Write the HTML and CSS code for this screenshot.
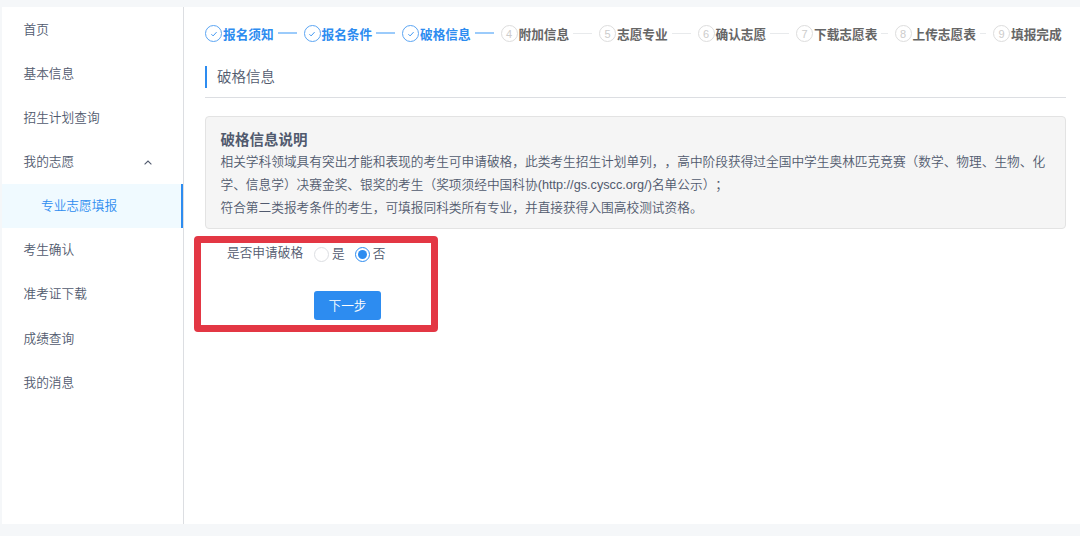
FILE: index.html
```
<!DOCTYPE html>
<html lang="zh-CN">

<head>
    <meta charset="UTF-8">
    <meta name="viewport" content="width=device-width, initial-scale=1.0">
    <title>专业志愿填报</title>
    <link rel="stylesheet" href="styles.css">
</head>

<body>
    <div class="layout">
        <nav class="sidebar">
            <a class="menu-item">首页</a>
            <a class="menu-item">基本信息</a>
            <a class="menu-item">招生计划查询</a>
            <a class="menu-item menu-parent">我的志愿
                <svg class="arrow" width="8" height="5" viewBox="0 0 8 5"><path d="M0.6 4.4 L4 1 L7.4 4.4" /></svg>
            </a>
            <a class="menu-item menu-sub active">专业志愿填报</a>
            <a class="menu-item">考生确认</a>
            <a class="menu-item">准考证下载</a>
            <a class="menu-item">成绩查询</a>
            <a class="menu-item">我的消息</a>
        </nav>

        <main class="content">
            <div class="steps">
                <div class="step done">
                    <span class="step-icon"><svg width="8" height="8" viewBox="0 0 8 8"><path d="M1.4 4.2 L3.1 5.9 L6.6 2.1" /></svg></span>
                    <span class="step-title">报名须知</span>
                </div>
                <div class="step done">
                    <span class="step-icon"><svg width="8" height="8" viewBox="0 0 8 8"><path d="M1.4 4.2 L3.1 5.9 L6.6 2.1" /></svg></span>
                    <span class="step-title">报名条件</span>
                </div>
                <div class="step done">
                    <span class="step-icon"><svg width="8" height="8" viewBox="0 0 8 8"><path d="M1.4 4.2 L3.1 5.9 L6.6 2.1" /></svg></span>
                    <span class="step-title">破格信息</span>
                </div>
                <div class="step">
                    <span class="step-icon">4</span>
                    <span class="step-title">附加信息</span>
                </div>
                <div class="step">
                    <span class="step-icon">5</span>
                    <span class="step-title">志愿专业</span>
                </div>
                <div class="step">
                    <span class="step-icon">6</span>
                    <span class="step-title">确认志愿</span>
                </div>
                <div class="step">
                    <span class="step-icon">7</span>
                    <span class="step-title">下载志愿表</span>
                </div>
                <div class="step">
                    <span class="step-icon">8</span>
                    <span class="step-title">上传志愿表</span>
                </div>
                <div class="step">
                    <span class="step-icon">9</span>
                    <span class="step-title">填报完成</span>
                </div>
            </div>

            <div class="section-title"><h2>破格信息</h2></div>

            <div class="notice">
                <h3>破格信息说明</h3>
                <p>相关学科领域具有突出才能和表现的考生可申请破格，此类考生招生计划单列，，高中阶段获得过全国中学生奥林匹克竞赛（数学、物理、生物、化<br>学、信息学）决赛金奖、银奖的考生（奖项须经中国科协(http://gs.cyscc.org/)名单公示）；</p>
                <p>符合第二类报考条件的考生，可填报同科类所有专业，并直接获得入围高校测试资格。</p>
            </div>

            <form class="apply-form">
                <div class="form-row">
                    <span class="form-label">是否申请破格</span>
                    <label class="radio"><span class="dot"></span>是</label>
                    <label class="radio checked"><span class="dot"></span>否</label>
                </div>
                <button type="button" class="next-btn">下一步</button>
                <div class="highlight"></div>
            </form>
        </main>
    </div>
</body>

</html>
```
FILE: styles.css
```
* {
    box-sizing: border-box;
}

body {
    margin: 0;
    height: 536px;
    padding: 7px 0 12px 2px;
    background-color: #f5f7f9;
    font-family: "Liberation Sans", "Noto Sans CJK SC", sans-serif;
    font-size: 12.69px;
    font-weight: 350;
    text-spacing-trim: space-all;
    color: #515a6e;
    overflow: hidden;
}

h2,
h3,
p {
    margin: 0;
}

.layout {
    display: flex;
    height: 100%;
    background-color: #fff;
}

/* left menu */
.sidebar {
    width: 182px;
    flex: none;
    border-right: 1px solid #dcdee2;
}

.menu-item {
    display: flex;
    align-items: center;
    height: 44.15px;
    padding: 0 0 2px 21.5px;
}

.menu-parent {
    justify-content: space-between;
    padding-right: 31px;
}

.arrow {
    margin-top: 4px;
    fill: none;
    stroke: #515a6e;
    stroke-width: 1.1;
}

.menu-sub {
    padding-left: 39px;
}

.active {
    color: #2d8cf0;
    background-color: #f0faff;
    border-right: 2px solid #2d8cf0;
}

.content {
    flex: 1;
    min-width: 0;
    padding: 17.5px 14px 0 21px;
}

/* steps */
.steps {
    display: flex;
    height: 18px;
    margin-right: -14px;
}

.step {
    display: flex;
    align-items: center;
    flex: none;
    width: 98.5px;
    color: #666;
}

.step-icon {
    display: flex;
    align-items: center;
    justify-content: center;
    flex: none;
    width: 17px;
    height: 17px;
    margin-right: 1px;
    border: 1px solid #ddd;
    border-radius: 50%;
    font-size: 11px;
    color: #ccc;
}

.step-icon svg {
    fill: none;
    stroke: #2d8cf0;
    stroke-width: 0.9;
}

.step-title {
    font-weight: bold;
    white-space: nowrap;
}

.step::after {
    content: "";
    flex: 1;
    height: 1px;
    margin: 0 7px 1px 4px;
    background-color: #e8eaec;
}

.step:last-child::after {
    display: none;
}

.done {
    color: #2d8cf0;
}

.done .step-icon {
    border-color: #5ba5f3;
}

.done::after {
    height: 2px;
    background-color: #9bcbfb;
}

.section-title {
    height: 32px;
    margin-top: 23.5px;
    border-bottom: 1px solid #dcdee2;
}

.section-title h2 {
    height: 22px;
    padding-left: 10px;
    border-left: 2px solid #2d8cf0;
    font-size: 14.5px;
    font-weight: 350;
    line-height: 22px;
}

.notice {
    height: 113px;
    margin-top: 18px;
    padding: 11.5px 14.5px;
    background-color: #f5f5f5;
    border: 1px solid #e3e3e3;
    border-radius: 4px;
    line-height: 22.7px;
    white-space: nowrap;
}

.notice h3 {
    font-size: 14.5px;
    font-weight: bold;
    line-height: 22.7px;
}

/* form */
.apply-form {
    position: relative;
    padding: 14px 0 0 22px;
}

.form-row {
    display: flex;
    align-items: center;
    height: 22px;
}

.form-label {
    width: 87px;
    margin-top: -5px;
}

.radio {
    display: flex;
    align-items: center;
    margin-right: 10px;
    line-height: 17px;
}

.dot {
    display: flex;
    align-items: center;
    justify-content: center;
    width: 15px;
    height: 15px;
    margin-right: 3px;
    border: 1px solid #dcdee2;
    border-radius: 50%;
}

.checked .dot {
    border-color: #2d8cf0;
}

.checked .dot::after {
    content: "";
    width: 9px;
    height: 9px;
    border-radius: 50%;
    background-color: #2d8cf0;
}

.next-btn {
    display: block;
    width: 67px;
    height: 29px;
    margin: 26px 0 0 87px;
    padding: 0 0 2px;
    border: none;
    border-radius: 3px;
    background-color: #2d8cf0;
    color: #fff;
    font: inherit;
}

.highlight {
    position: absolute;
    top: 7px;
    left: -11px;
    width: 244px;
    height: 96px;
    border: 7px solid #e33744;
    border-radius: 4px;
    pointer-events: none;
}
```
